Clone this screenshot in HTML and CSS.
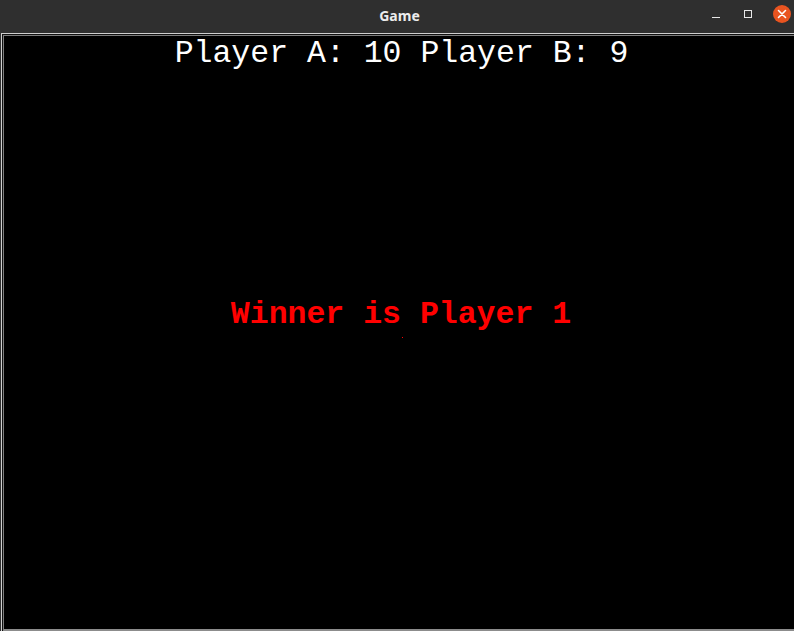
FILE: index.html
```html
<!DOCTYPE html>
<html>
<head>
<meta charset="utf-8">
<title>Game</title>
<link rel="stylesheet" href="styles.css">
</head>
<body>
<div class="app">
  <header class="titlebar">
    <span class="title">Game</span>
    <div class="controls">
      <span class="ctl min"></span>
      <span class="ctl max"></span>
      <span class="ctl close">
        <svg width="18" height="18" viewBox="0 0 18 18">
          <circle cx="9" cy="9" r="9" fill="#e95420"/>
          <path d="M5.5 5.5 L12.5 12.5 M12.5 5.5 L5.5 12.5" stroke="#ffffff" stroke-width="1.6" stroke-linecap="round"/>
        </svg>
      </span>
    </div>
  </header>
  <div class="window">
    <div class="frame">
      <main class="canvas">
        <div class="score">Player A: 10 Player B: 9</div>
        <div class="winner">Winner is Player 1</div>
        <span class="ball"></span>
      </main>
    </div>
  </div>
</div>
</body>
</html>
```
FILE: styles.css
```css
html, body {
  margin: 0;
  padding: 0;
  background: #2f2f2f;
  width: 794px;
  height: 631px;
  overflow: hidden;
}
.app {
  display: flex;
  flex-direction: column;
  height: 631px;
}
.titlebar {
  position: relative;
  height: 33px;
  display: flex;
  align-items: center;
  justify-content: center;
  background: #2f2f2f;
  flex: none;
}
.title {
  font-family: "Noto Sans", "DejaVu Sans", sans-serif;
  font-weight: bold;
  font-size: 14px;
  color: #ececec;
  margin-left: 5px;
  margin-top: -3px;
}
.controls {
  position: absolute;
  right: 3px;
  top: 5px;
  display: flex;
  align-items: center;
}
.ctl {
  display: block;
}
.min {
  width: 8px;
  height: 0;
  border-top: 1.5px solid #e8e8e8;
  margin-top: 7px;
  margin-right: 24px;
}
.max {
  width: 6px;
  height: 6px;
  border: 1.4px solid #e8e8e8;
  margin-right: 21px;
}
.close {
  width: 18px;
  height: 18px;
}
.close svg {
  display: block;
}
.window {
  flex: 1;
  margin-left: 1px;
  border-top: 1px solid #cfcfcf;
  border-left: 1px solid #cfcfcf;
  display: flex;
}
.frame {
  flex: 1;
  border-top: 1px solid #111111;
  border-left: 1px solid #111111;
  display: flex;
}
.canvas {
  position: relative;
  flex: 1;
  background: #000000;
  border-top: 1px solid #7d7d7d;
  border-left: 1px solid #7d7d7d;
  border-bottom: 2px solid #8c8c8c;
  display: flex;
  flex-direction: column;
  align-items: center;
}
.score {
  font-family: "Courier New", "Nimbus Mono PS", "FreeMono", "Liberation Mono", monospace;
  font-size: 31.5px;
  line-height: 36px;
  color: #ffffff;
  white-space: pre;
  margin-left: 5px;
}
.winner {
  font-family: "Courier New", "Nimbus Mono PS", "FreeMono", "Liberation Mono", monospace;
  font-weight: bold;
  font-size: 31.5px;
  line-height: 36px;
  color: #ff0000;
  white-space: pre;
  margin-top: 225px;
  margin-left: 4px;
}
.ball {
  position: absolute;
  left: 398px;
  top: 301px;
  width: 1px;
  height: 1px;
  background: #ff0000;
}
```
